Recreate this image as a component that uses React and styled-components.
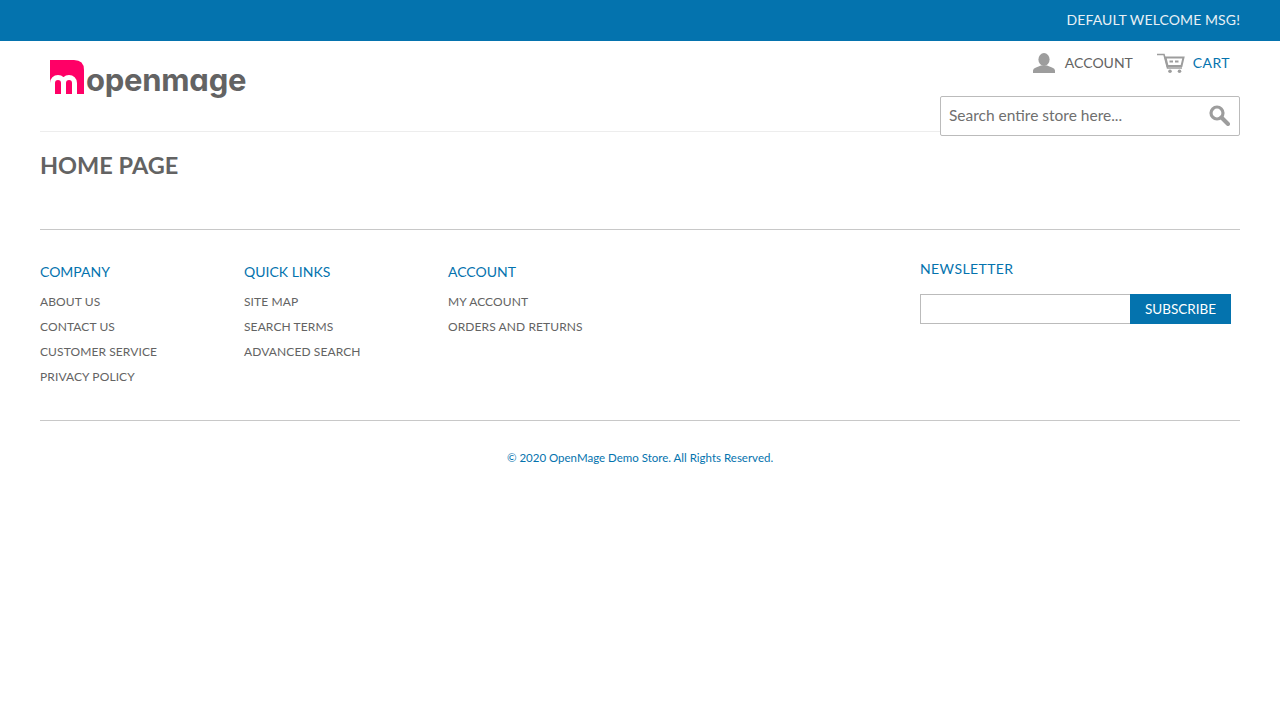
import React from 'react';
import styled, { createGlobalStyle } from 'styled-components';

const blue = '#0473ae';
const grey = '#636363';

const GlobalStyle = createGlobalStyle`
  html, body {
    margin: 0;
    padding: 0;
    background: #fff;
    font-family: Lato, "Open Sans", sans-serif;
    color: ${grey};
  }
  * { box-sizing: border-box; }
`;

const WelcomeBar = styled.div`
  height: 41px;
  background: ${blue};
  color: #e8f0f5;
  font-size: 14px;
  letter-spacing: 0.1px;
  line-height: 40px;
  text-align: right;
  padding: 0 40px;
`;

const Header = styled.header`
  height: 91px;
  margin: 0 40px;
  border-bottom: 1px solid #ededed;
  display: flex;
  justify-content: space-between;
`;

const Logo = styled.a`
  display: flex;
  align-items: flex-start;
  margin: 19px 0 0 10px;
  height: 38px;
  text-decoration: none;
`;

const LogoText = styled.span`
  font-family: Inter, sans-serif;
  font-feature-settings: "cv11";
  font-size: 31px;
  font-weight: 700;
  letter-spacing: -0.25px;
  line-height: 38px;
  margin: 1px 0 0 2px;
  color: ${grey};
`;

const HeaderRight = styled.div`
  width: 300px;
  display: flex;
  flex-direction: column;
  align-items: flex-end;
`;

const AccountLinks = styled.nav`
  flex: none;
  height: 55px;
  display: flex;
  align-items: flex-start;
  padding: 9px 10px 0 0;
  gap: 24px;
`;

const AccountLink = styled.a`
  display: flex;
  align-items: center;
  gap: ${props => props.$gap}px;
  height: 24px;
  font-size: 14px;
  letter-spacing: ${props => props.$spacing}px;
  color: ${props => (props.$active ? blue : grey)};
  text-decoration: none;

  svg {
    margin-top: 2px;
  }
`;

const SearchBox = styled.div`
  position: relative;
  z-index: 1;
  flex: none;
  width: 300px;
  height: 40px;
  background: #fff;
  border: 1px solid #bbb;
  border-radius: 2px;
  display: flex;
  align-items: center;
  justify-content: space-between;
  padding: 0 9px 2px 8px;
  font-size: 15.5px;
  color: #6f6f6f;
`;

const Main = styled.main`
  margin: 0 40px;
  height: 98px;
  padding-top: 17px;
  border-bottom: 1px solid #c8c8c8;
`;

const Title = styled.h1`
  margin: 0;
  font-size: 23.5px;
  line-height: 32px;
  font-weight: 700;
  color: ${grey};
`;

const Footer = styled.footer`
  margin: 0 40px;
  height: 191px;
  padding-top: 31px;
  border-bottom: 1px solid #c8c8c8;
  display: flex;
  justify-content: space-between;
`;

const LinkColumns = styled.div`
  display: flex;
`;

const LinkColumn = styled.div`
  width: 204px;
`;

const ColumnTitle = styled.h6`
  margin: 0;
  font-size: 14px;
  font-weight: 400;
  line-height: 22px;
  letter-spacing: ${props => props.$spacing || 0}px;
  color: ${blue};
`;

const LinkList = styled.ul`
  list-style: none;
  margin: 6px 0 0;
  padding: 0;
`;

const LinkItem = styled.li`
  height: 25px;
  line-height: 25px;
  font-size: 12px;
  letter-spacing: 0.1px;
  color: ${grey};
`;

const Newsletter = styled.div`
  width: 320px;
  margin-top: -3px;
`;

const SubscribeRow = styled.div`
  display: flex;
  margin-top: 14px;
`;

const EmailInput = styled.input`
  width: 210px;
  height: 30px;
  border: 1px solid #bbb;
  border-right: 0;
  outline: 0;
  padding: 0 6px;
  background: #fff;
`;

const SubscribeButton = styled.button`
  width: 101px;
  height: 30px;
  border: 0;
  padding: 0;
  background: ${blue};
  color: #fff;
  font-family: inherit;
  font-size: 13.5px;
`;

const Copyright = styled.address`
  margin-top: 29px;
  font-style: normal;
  font-size: 11.5px;
  line-height: 16px;
  text-align: center;
  color: ${blue};
`;

const columns = [
  { title: 'COMPANY', links: ['ABOUT US', 'CONTACT US', 'CUSTOMER SERVICE', 'PRIVACY POLICY'] },
  { title: 'QUICK LINKS', links: ['SITE MAP', 'SEARCH TERMS', 'ADVANCED SEARCH'] },
  { title: 'ACCOUNT', links: ['MY ACCOUNT', 'ORDERS AND RETURNS'] },
];

const LogoMark = () => (
  <svg width="34" height="34" viewBox="0 0 34 34" fill="none">
    <path d="M0 0H24Q34 0 34 10V34H0Z" fill="#ff0066" />
    <path
      d="M2.5 34V23a5.5 5.5 0 0 1 11 0V34M13.5 23a5.5 5.5 0 0 1 11 0V34"
      stroke="#fff"
      strokeWidth="5"
    />
  </svg>
);

const UserIcon = () => (
  <svg width="22" height="20" viewBox="0 0 22 20" fill="#9d9d9d">
    <ellipse cx="11" cy="6.5" rx="5.6" ry="6.5" />
    <path d="M0 20V17.5Q0 15.5 3 14.5L8 12.5H14L19 14.5Q22 15.5 22 17.5V20Z" />
  </svg>
);

const CartIcon = () => (
  <svg width="28" height="20" viewBox="0 0 28 20" fill="none" stroke="#9d9d9d">
    <path d="M0 1.5H7L10.5 15H25" strokeWidth="1.6" />
    <path d="M8.5 4.5H26.5L24.5 13H10.5Z" strokeWidth="2" />
    <path d="M12.5 8.5H16M18 8.5H21.5" strokeWidth="2" />
    <circle cx="13" cy="18.2" r="1.8" fill="#9d9d9d" stroke="none" />
    <circle cx="22.5" cy="18.2" r="1.8" fill="#9d9d9d" stroke="none" />
  </svg>
);

const SearchIcon = () => (
  <svg width="21" height="21" viewBox="0 0 21 21" fill="none" stroke="#9d9d9d">
    <circle cx="8" cy="8" r="6" strokeWidth="3.2" />
    <path d="M12.5 12.5L19 19" strokeWidth="4" strokeLinecap="round" />
  </svg>
);

const App = () => (
  <>
    <GlobalStyle />
    <WelcomeBar>DEFAULT WELCOME MSG!</WelcomeBar>
    <Header>
      <Logo>
        <LogoMark />
        <LogoText>openmage</LogoText>
      </Logo>
      <HeaderRight>
        <AccountLinks>
          <AccountLink $gap={10} $spacing={0}><UserIcon />ACCOUNT</AccountLink>
          <AccountLink $gap={8} $spacing={0.4} $active><CartIcon />CART</AccountLink>
        </AccountLinks>
        <SearchBox>
          Search entire store here...
          <SearchIcon />
        </SearchBox>
      </HeaderRight>
    </Header>
    <Main>
      <Title>HOME PAGE</Title>
    </Main>
    <Footer>
      <LinkColumns>
        {columns.map(col => (
          <LinkColumn key={col.title}>
            <ColumnTitle>{col.title}</ColumnTitle>
            <LinkList>
              {col.links.map(link => <LinkItem key={link}>{link}</LinkItem>)}
            </LinkList>
          </LinkColumn>
        ))}
      </LinkColumns>
      <Newsletter>
        <ColumnTitle $spacing={0.4}>NEWSLETTER</ColumnTitle>
        <SubscribeRow>
          <EmailInput />
          <SubscribeButton>SUBSCRIBE</SubscribeButton>
        </SubscribeRow>
      </Newsletter>
    </Footer>
    <Copyright>© 2020 OpenMage Demo Store. All Rights Reserved.</Copyright>
  </>
);

export default App;
